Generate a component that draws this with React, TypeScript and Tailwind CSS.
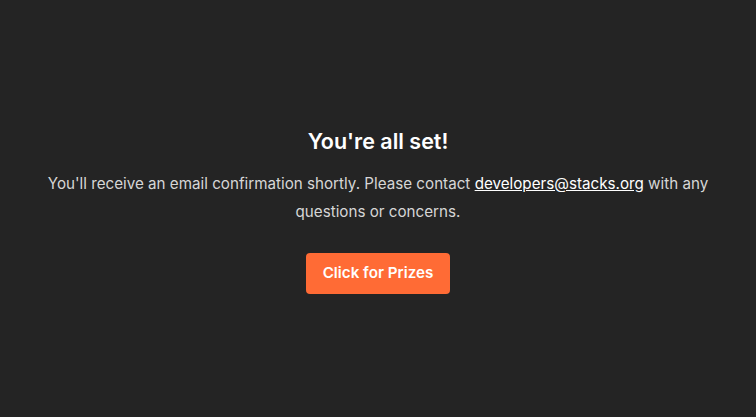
export default function App() {
  return (
    <div
      className="min-h-screen w-full bg-[#242424] flex flex-col items-center justify-center px-10"
      style={{ fontFamily: "Inter, 'Noto Sans', sans-serif" }}
    >
      <h1 className="text-[21.5px] leading-[28px] font-semibold text-white mt-[3px]">You're all set!</h1>
      <p className="mt-[15px] text-[15.2px] leading-[28px] text-[#d6d6d6] text-center max-w-[690px]">
        You'll receive an email confirmation shortly. Please contact{" "}
        <a href="#" className="text-white underline">developers@stacks.org</a> with any questions or concerns.
      </p>
      <button className="mt-[27px] h-[41px] w-[144px] rounded-[4px] bg-[#ff6b35] text-white text-[15.2px] font-semibold">
        Click for Prizes
      </button>
    </div>
  );
}
